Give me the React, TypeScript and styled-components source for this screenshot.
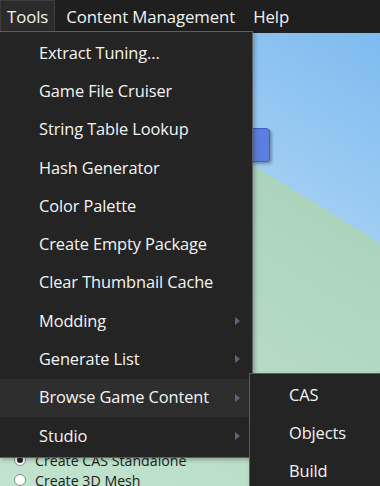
import React from 'react';
import styled, {createGlobalStyle} from 'styled-components';

const GlobalStyle = createGlobalStyle`
  html, body {
    margin: 0;
    padding: 0;
    background: #1f1f1f;
  }
  * {
    box-sizing: border-box;
  }
`;

const Window = styled.div`
  position: relative;
  width: 380px;
  height: 486px;
  overflow: hidden;
  display: flex;
  flex-direction: column;
  font-family: "Open Sans", "Noto Sans", sans-serif;
`;

const MenuBar = styled.div`
  height: 33px;
  flex-shrink: 0;
  display: flex;
  align-items: stretch;
  background: #1f1f1f;
`;

const BarItem = styled.div<{ $open?: boolean }>`
  display: flex;
  align-items: center;
  padding: 0 6px 2px;
  margin-right: 4px;
  font-size: 16.8px;
  letter-spacing: -0.1px;
  color: #f2f2f2;
  background: ${p => (p.$open ? '#2b2b2b' : 'transparent')};
  border: 1px solid ${p => (p.$open ? '#3d3d3d' : 'transparent')};
  border-bottom: none;
`;

const Workspace = styled.div`
  flex: 1;
  display: flex;
  flex-direction: column;
  background: linear-gradient(211.6deg, #7dbbf0 0%, #a0cdf2 30.6%, #acd4bd 30.6%, #c2e4cf 100%);
`;

const ButtonRow = styled.div`
  display: flex;
  justify-content: flex-end;
  padding: 95px 110px 0 0;
`;

const BlueButton = styled.div`
  width: 130px;
  height: 34px;
  border-radius: 4px;
  background: #5a7fde;
  border: 1px solid #3f5fc2;
  box-shadow: 2px 2px 3px rgba(0, 0, 0, 0.3);
`;

const RadioList = styled.div`
  margin-top: auto;
  margin-bottom: -4px;
  display: flex;
  flex-direction: column;
  padding: 0 0 0 14px;
`;

const RadioRow = styled.label`
  display: flex;
  align-items: center;
  gap: 9px;
  height: 20px;
  font-size: 14.2px;
  color: #1c1c1c;
`;

const RadioDot = styled.span<{ $checked?: boolean }>`
  width: 12px;
  height: 12px;
  border-radius: 50%;
  background: #fff;
  border: 1px solid #8a8a8a;
  display: flex;
  align-items: center;
  justify-content: center;

  &::after {
    content: '';
    width: 6px;
    height: 6px;
    border-radius: 50%;
    background: ${p => (p.$checked ? '#222' : 'transparent')};
  }
`;

const Dropdown = styled.div`
  position: absolute;
  top: 31px;
  left: -1px;
  width: 254px;
  padding: 2px 0;
  background: #242424;
  border: 1px solid #5e5e5e;
  box-shadow: 2px 2px 4px rgba(0, 0, 0, 0.25);
`;

const SubMenu = styled(Dropdown)`
  top: 373px;
  left: 249px;
  width: 160px;
  height: 140px;
`;

const MenuItem = styled.div<{ $active?: boolean }>`
  position: relative;
  height: 38.3px;
  display: flex;
  align-items: center;
  padding: 0 0 2px 39px;
  font-size: 16.4px;
  letter-spacing: -0.1px;
  color: #f4f4f4;
  background: ${p => (p.$active ? '#2e2e2e' : 'transparent')};
`;

const Arrow = styled.svg`
  position: absolute;
  right: 12px;
  top: 15px;
`;

const tools: { label: string; sub?: boolean; active?: boolean }[] = [
    {label: 'Extract Tuning...'},
    {label: 'Game File Cruiser'},
    {label: 'String Table Lookup'},
    {label: 'Hash Generator'},
    {label: 'Color Palette'},
    {label: 'Create Empty Package'},
    {label: 'Clear Thumbnail Cache'},
    {label: 'Modding', sub: true},
    {label: 'Generate List', sub: true},
    {label: 'Browse Game Content', sub: true, active: true},
    {label: 'Studio', sub: true},
];

const SubArrow = () => (
    <Arrow width="5" height="8" viewBox="0 0 5 8">
        <path d="M0 0L5 4L0 8Z" fill="#62627a"/>
    </Arrow>
);

const App: React.FC = () => {
    return (
        <Window>
            <GlobalStyle/>
            <MenuBar>
                <BarItem $open>Tools</BarItem>
                <BarItem>Content Management</BarItem>
                <BarItem>Help</BarItem>
            </MenuBar>
            <Workspace>
                <ButtonRow>
                    <BlueButton/>
                </ButtonRow>
                <RadioList>
                    <RadioRow><RadioDot $checked/>Create CAS Standalone</RadioRow>
                    <RadioRow><RadioDot/>Create 3D Mesh</RadioRow>
                </RadioList>
            </Workspace>
            <Dropdown>
                {tools.map(t => (
                    <MenuItem key={t.label} $active={t.active}>
                        {t.label}
                        {t.sub && <SubArrow/>}
                    </MenuItem>
                ))}
            </Dropdown>
            <SubMenu>
                <MenuItem>CAS</MenuItem>
                <MenuItem>Objects</MenuItem>
                <MenuItem>Build</MenuItem>
            </SubMenu>
        </Window>
    );
};

export default App;
